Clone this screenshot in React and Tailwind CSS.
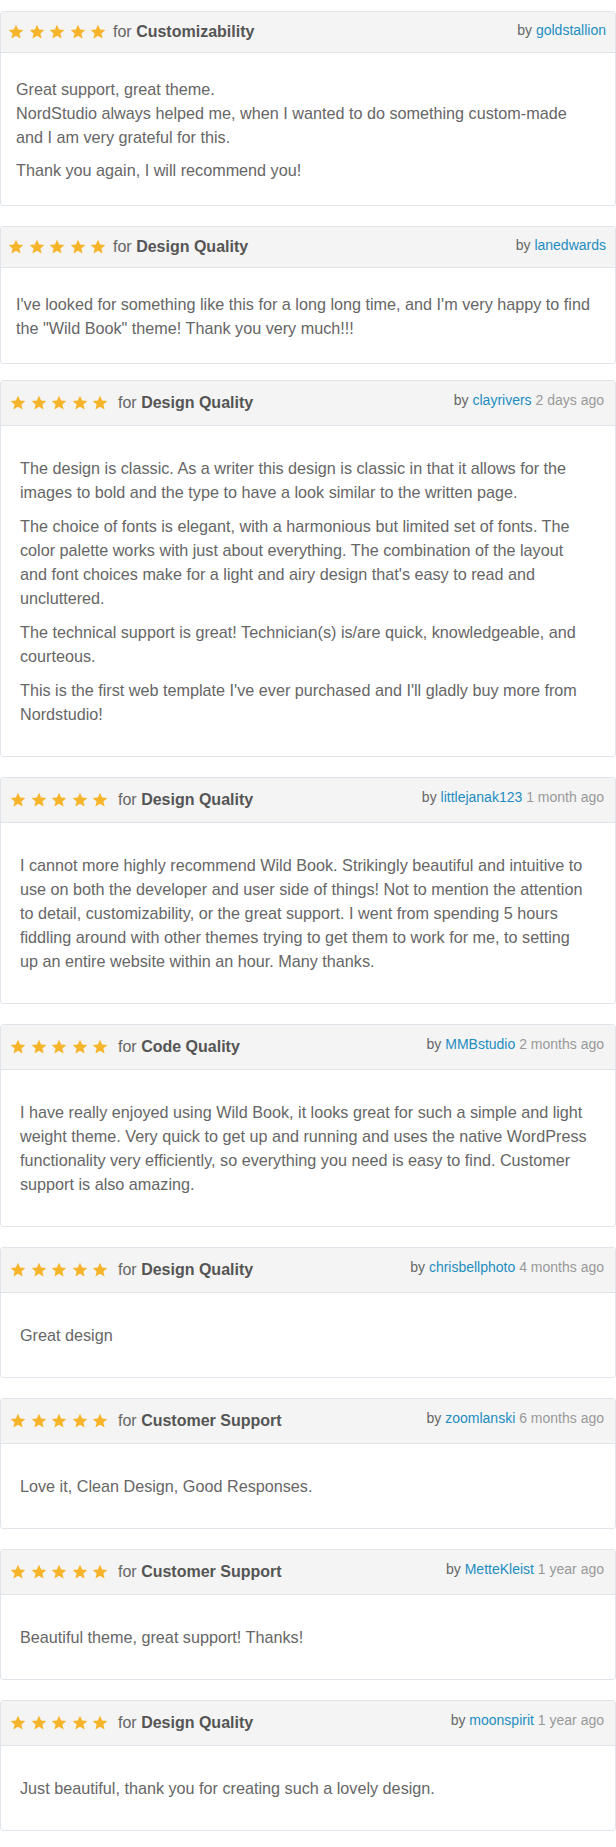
const reviews = [
  {
    compact: true,
    category: "Customizability",
    author: "goldstallion",
    paragraphs: [
      ["Great support, great theme.", "NordStudio always helped me, when I wanted to do something custom-made", "and I am very grateful for this."],
      ["Thank you again, I will recommend you!"],
    ],
  },
  {
    compact: true,
    category: "Design Quality",
    author: "lanedwards",
    paragraphs: [["I've looked for something like this for a long long time, and I'm very happy to find", "the \"Wild Book\" theme! Thank you very much!!!"]],
  },
  {
    category: "Design Quality",
    author: "clayrivers",
    when: "2 days ago",
    paragraphs: [
      ["The design is classic. As a writer this design is classic in that it allows for the", "images to bold and the type to have a look similar to the written page."],
      [
        "The choice of fonts is elegant, with a harmonious but limited set of fonts. The",
        "color palette works with just about everything. The combination of the layout",
        "and font choices make for a light and airy design that's easy to read and",
        "uncluttered.",
      ],
      ["The technical support is great! Technician(s) is/are quick, knowledgeable, and", "courteous."],
      ["This is the first web template I've ever purchased and I'll gladly buy more from", "Nordstudio!"],
    ],
  },
  {
    category: "Design Quality",
    author: "littlejanak123",
    when: "1 month ago",
    paragraphs: [
      [
        "I cannot more highly recommend Wild Book. Strikingly beautiful and intuitive to",
        "use on both the developer and user side of things! Not to mention the attention",
        "to detail, customizability, or the great support. I went from spending 5 hours",
        "fiddling around with other themes trying to get them to work for me, to setting",
        "up an entire website within an hour. Many thanks.",
      ],
    ],
  },
  {
    category: "Code Quality",
    author: "MMBstudio",
    when: "2 months ago",
    paragraphs: [
      [
        "I have really enjoyed using Wild Book, it looks great for such a simple and light",
        "weight theme. Very quick to get up and running and uses the native WordPress",
        "functionality very efficiently, so everything you need is easy to find. Customer",
        "support is also amazing.",
      ],
    ],
  },
  { category: "Design Quality", author: "chrisbellphoto", when: "4 months ago", paragraphs: [["Great design"]] },
  { category: "Customer Support", author: "zoomlanski", when: "6 months ago", paragraphs: [["Love it, Clean Design, Good Responses."]] },
  { category: "Customer Support", author: "MetteKleist", when: "1 year ago", paragraphs: [["Beautiful theme, great support! Thanks!"]] },
  { category: "Design Quality", author: "moonspirit", when: "1 year ago", paragraphs: [["Just beautiful, thank you for creating such a lovely design."]] },
];

function Star() {
  return (
    <svg width="16" height="16" viewBox="0 0 24 24" className="shrink-0">
      <path
        d="M12 1.2l3.2 7.2 7.8.7-5.9 5.1 1.8 7.6L12 17.8l-6.9 4 1.8-7.6-5.9-5.1 7.8-.7z"
        fill="#f6b42b"
      />
    </svg>
  );
}

function ReviewCard({ review }) {
  const compact = review.compact;
  return (
    <article className="rounded-[3px] border border-[#dfe5ea] bg-white">
      <header
        className={
          compact
            ? "flex h-[41px] items-center justify-between border-b border-[#dfe5ea] bg-[#f4f4f4] pl-[7px] pr-[9px]"
            : "flex h-[45px] items-center justify-between border-b border-[#dfe5ea] bg-[#f4f4f4] pl-[9px] pr-[11px]"
        }
      >
        <div className="flex items-center">
          <div className="flex items-center gap-[4.5px]">
            {[0, 1, 2, 3, 4].map((i) => (
              <Star key={i} />
            ))}
          </div>
          <span className={compact ? "ml-[7px] text-[16px] text-[#666]" : "ml-[10px] text-[16px] text-[#666]"}>
            for <b className="font-bold text-[#555]">{review.category}</b>
          </span>
        </div>
        <span className={compact ? "pb-[4px] text-[14px] text-[#666]" : "pb-[6px] text-[14px] text-[#666]"}>
          by <span className="text-[#1d8dc1]">{review.author}</span>
          {review.when && <span className="text-[#999]"> {review.when}</span>}
        </span>
      </header>
      <div
        className={
          compact
            ? "flex flex-col gap-[9px] pb-[23px] pl-[15px] pr-2 pt-6 text-[16.2px] leading-6 text-[#666]"
            : "flex flex-col gap-[10px] py-[30px] pl-[19px] pr-2 text-[16.2px] leading-6 text-[#666]"
        }
      >
        {review.paragraphs.map((lines, i) => (
          <p key={i} className="whitespace-nowrap">
            {lines.map((line, j) => (
              <span key={j}>
                {j > 0 && <br />}
                {line}
              </span>
            ))}
          </p>
        ))}
      </div>
    </article>
  );
}

export default function App() {
  return (
    <div className="min-h-[1847px] bg-white pb-[14px] pt-[11px] font-['Liberation_Sans',Arial,sans-serif]">
      <div className="flex flex-col gap-5">
        {reviews.map((review, i) => (
          <div key={i} className={i === 2 ? "-mt-1" : ""}>
            <ReviewCard review={review} />
          </div>
        ))}
      </div>
    </div>
  );
}
